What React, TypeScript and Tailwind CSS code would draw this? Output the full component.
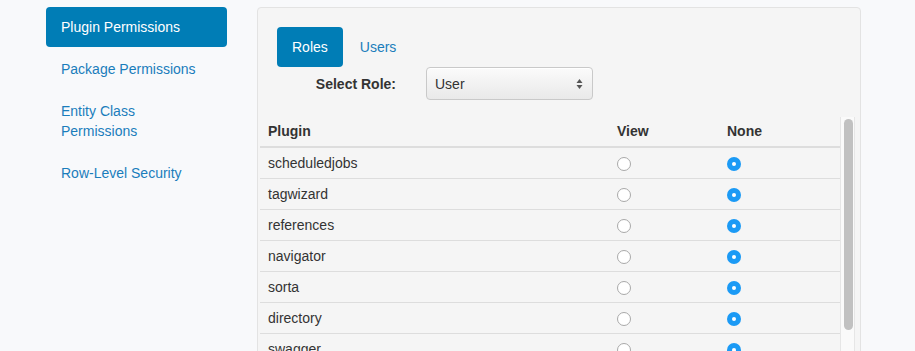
import React from "react";

const rows = [
  "scheduledjobs",
  "tagwizard",
  "references",
  "navigator",
  "sorta",
  "directory",
  "swagger",
  "dataexplorer",
];

function Radio({ checked }: { checked?: boolean }) {
  if (checked) {
    return (
      <span className="inline-flex w-[14px] h-[14px] rounded-full bg-[#1b9af5] items-center justify-center align-middle">
        <span className="w-[4px] h-[4px] rounded-full bg-white" />
      </span>
    );
  }
  return (
    <span className="inline-block w-[14px] h-[14px] rounded-full border border-[#a9a9a9] bg-white align-middle" />
  );
}

export default function App() {
  return (
    <div
      className="h-[351px] overflow-hidden bg-[#f8f9fb] text-[14px] leading-[20px] text-[#333]"
      style={{ fontFamily: '"Liberation Sans", Arial, sans-serif' }}
    >
      <div className="flex pl-[46px] pt-[7px]">
        {/* Sidebar */}
        <ul className="w-[181px] flex flex-col gap-[2px]">
          <li className="rounded-[4px] bg-[#007db6] text-white px-[15px] py-[10px]">
            Plugin Permissions
          </li>
          <li className="px-[15px] py-[10px] text-[#1a7dbb]">Package Permissions</li>
          <li className="px-[15px] py-[10px] text-[#1a7dbb]">
            Entity Class
            <br />
            Permissions
          </li>
          <li className="px-[15px] py-[10px] text-[#1a7dbb]">Row-Level Security</li>
        </ul>

        {/* Panel */}
        <div className="ml-[30px] w-[604px] h-[400px] rounded-[4px] border border-[#e3e3e3] bg-[#f5f5f5]">
          <div className="px-[19px] pt-[19px]">
            <div className="flex gap-[2px]">
              <div className="rounded-[4px] bg-[#007db6] text-white px-[15px] py-[10px]">Roles</div>
              <div className="px-[15px] py-[10px] text-[#1a7dbb]">Users</div>
            </div>
            <div className="flex items-center">
              <label className="w-[134px] pr-[15px] text-right font-bold">Select Role:</label>
              <div className="ml-[15px] w-[167px] h-[33px] rounded-[4px] border border-[#c9c9c9] bg-gradient-to-b from-[#fbfbfb] to-[#e9e9e9] flex items-center justify-between pl-[8px] pr-[9px] shadow-[inset_0_1px_0_#ffffff]">
                <span className="text-[#333]">User</span>
                <svg width="7" height="12" viewBox="0 0 7 12">
                  <path d="M3.5 1 L6.5 5 L0.5 5 Z" fill="#555" />
                  <path d="M3.5 11 L6.5 7 L0.5 7 Z" fill="#555" />
                </svg>
              </div>
            </div>
          </div>

          <div className="flex mt-[16px] pl-[2px]">
            <table className="w-[580px] border-collapse">
              <thead>
                <tr className="border-b-2 border-[#dddddd]">
                  <th className="text-left font-bold px-[8px] py-[5px] w-[349px]">Plugin</th>
                  <th className="text-left font-bold px-[8px] py-[5px] w-[110px]">View</th>
                  <th className="text-left font-bold px-[8px] py-[5px]">None</th>
                </tr>
              </thead>
              <tbody>
                {rows.map((r) => (
                  <tr key={r} className="border-b border-[#dddddd]">
                    <td className="px-[8px] py-[5px]">{r}</td>
                    <td className="px-[8px] py-[5px]">
                      <span className="flex items-center h-[20px] pt-[1px]">
                        <Radio />
                      </span>
                    </td>
                    <td className="px-[8px] py-[5px]">
                      <span className="flex items-center h-[20px] pt-[1px]">
                        <Radio checked />
                      </span>
                    </td>
                  </tr>
                ))}
              </tbody>
            </table>
            <div className="w-[15px] h-[260px] mt-[1px] bg-[#fafafa] border-l border-r border-[#e6e6e6] pt-[2px] pl-[3px]">
              <div className="w-[9px] h-[211px] rounded-full bg-[#c1c1c1]" />
            </div>
          </div>
        </div>
      </div>
    </div>
  );
}
